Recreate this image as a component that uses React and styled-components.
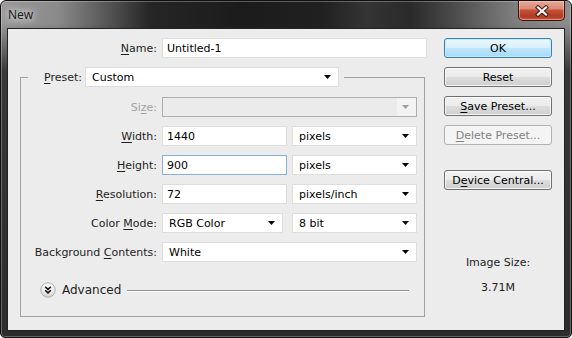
import React from 'react';
import styled, { createGlobalStyle, css } from 'styled-components';

const Global = createGlobalStyle`
  html, body { margin: 0; padding: 0; background: #ffffff; }
  body { font-family: "DejaVu Sans", "Liberation Sans", sans-serif; }
  * { box-sizing: border-box; }
  #root { width: 572px; height: 338px; }
`;

const Window = styled.div`
  width: 572px;
  height: 338px;
  display: flex;
  flex-direction: column;
  border: 1px solid #101010;
  border-radius: 6px 6px 5px 5px;
  overflow: hidden;
  background:
    linear-gradient(to bottom, rgba(48,48,48,0) 0px, rgba(48,48,48,0) 22px, rgba(48,48,48,0.92) 70px, #2c2c2c 100%),
    linear-gradient(90deg, #9a9a9a 0%, #8a8a8a 10%, #5a5a5a 18%, #262626 26%, #1b1b1b 42%, #202020 56%, #343434 64%, #2a2a2a 72%, #4e4e4e 80%, #7e7e7e 90%, #8e8e8e 100%);
  box-shadow: inset 0 0 0 1px rgba(255,255,255,0.28);
`;

const TitleBar = styled.div`
  height: 27px;
  flex: none;
  display: flex;
  align-items: flex-start;
  justify-content: space-between;
`;

const Title = styled.div`
  height: 27px;
  line-height: 27px;
  padding-left: 7px;
  font-family: "Noto Sans", "DejaVu Sans", sans-serif;
  font-size: 12px;
  color: #1c1c1c;
  text-shadow: 0 0 6px rgba(255,255,255,0.9), 0 0 10px rgba(255,255,255,0.6);
`;

const CloseButton = styled.div`
  width: 47px;
  height: 20px;
  margin-right: 6px;
  display: flex;
  align-items: center;
  justify-content: center;
  border: 1px solid #3c120b;
  border-top: none;
  border-radius: 0 0 5px 5px;
  background: linear-gradient(to bottom, #e7a898 0%, #d98a76 40%, #c4503c 50%, #b23a22 80%, #c8573c 100%);
  box-shadow: inset 0 0 0 1px rgba(255,220,210,0.45);
`;

const Client = styled.div`
  flex: 1;
  margin: 0 6px 6px 6px;
  border: 1px solid #222;
  background: #ececec;
  display: grid;
  grid-template-columns: 407px 108px;
  column-gap: 17px;
  align-items: start;
  padding: 9px 12px 0 12px;
  font-size: 11px;
  color: #1e1e1e;
`;

const LeftCol = styled.div`
  display: flex;
  flex-direction: column;
`;

const NameRow = styled.div`
  display: grid;
  grid-template-columns: 137px 265px;
  column-gap: 5px;
  align-items: center;
`;

const Label = styled.div`
  text-align: right;
  white-space: nowrap;
  color: ${p => (p.$disabled ? '#a3a3a3' : '#1e1e1e')};
  u { text-decoration: underline; text-underline-offset: 2px; }
`;

const GroupBox = styled.fieldset`
  margin: 9px 0 0 0;
  width: 405px;
  min-width: 0;
  border: 1px solid #a2a2a2;
  padding: 10px 0 18px 0;
`;

const Legend = styled.legend`
  padding: 0;
  margin-left: 7px;
`;

const LegendInner = styled.div`
  display: flex;
  align-items: center;
  gap: 3px;
  padding-right: 5px;
`;

const LegendLabel = styled(Label)`
  width: 54px;
`;

const FormGrid = styled.div`
  display: grid;
  grid-template-columns: 136px 125px 125px;
  column-gap: 5px;
  row-gap: 9px;
  align-items: center;
`;

const TextField = styled.div`
  height: 20px;
  display: flex;
  align-items: center;
  padding: 0 4px;
  background: #ffffff;
  color: #000;
  border: 1px solid ${p => (p.$focused ? '#86b0da' : '#dddddd')};
  ${p => p.$span && css`grid-column: span ${p.$span};`}
`;

const Select = styled.div`
  height: 20px;
  display: flex;
  align-items: center;
  justify-content: space-between;
  padding: 0 7px 0 6px;
  background: #ffffff;
  color: #000;
  border: 1px solid #dddddd;
  ${p => p.$width && css`width: ${p.$width}px;`}
  ${p => p.$span && css`grid-column: span ${p.$span};`}
  ${p => p.$disabled && css`
    background: linear-gradient(90deg, #ebebeb 0, #ebebeb calc(100% - 19px), #f3f3f3 calc(100% - 19px));
    border-color: #adadad;
  `}
`;

const AdvancedRow = styled.div`
  margin-top: 20px;
  height: 16px;
  display: flex;
  align-items: center;
  gap: 6px;
  padding-left: 19px;
  padding-right: 15px;
  font-size: 12px;
  color: #1e1e1e;
`;

const Rule = styled.div`
  flex: 1;
  height: 1px;
  margin-left: 0px;
  background: #8f8f8f;
  box-shadow: 0 1px 0 #ffffff;
`;

const RightCol = styled.div`
  display: flex;
  flex-direction: column;
  gap: 9px;
`;

const Button = styled.div`
  height: 20px;
  display: flex;
  align-items: center;
  justify-content: center;
  border-radius: 3px;
  border: 1px solid #707070;
  color: #000;
  background: linear-gradient(to bottom, #f2f2f2 0%, #ebebeb 50%, #dddddd 51%, #cfcfcf 100%);
  box-shadow: inset 0 0 0 1px rgba(255,255,255,0.75);
  white-space: nowrap;
  ${p => p.$primary && css`
    border-color: #3c7fb1;
    background: linear-gradient(to bottom, #eaf6fd 0%, #d9f0fc 50%, #bee6fd 51%, #a7d9f5 100%);
    box-shadow: inset 0 0 0 1px #c4ecfd;
  `}
  ${p => p.$disabled && css`
    border-color: #adb2b5;
    background: #f4f4f4;
    color: #838383;
    box-shadow: none;
  `}
  ${p => p.$gapBefore && css`margin-top: ${p.$gapBefore}px;`}
  u { text-decoration: underline; text-underline-offset: 2px; }
`;

const Info = styled.div`
  text-align: center;
  line-height: 14px;
  color: #1e1e1e;
  margin-top: ${p => p.$top}px;
`;

const Arrow = ({ disabled }) => (
  <svg width="7" height="4" viewBox="0 0 7 4">
    <path d="M0 0H7L3.5 4Z" fill={disabled ? '#a0a0a0' : '#000'} />
  </svg>
);

const CloseX = () => (
  <svg width="14" height="12" viewBox="0 0 14 12">
    <path d="M3 2.5L11 9.5M11 2.5L3 9.5" stroke="#4a1a12" strokeWidth="4.2" strokeLinecap="square" />
    <path d="M3 2.5L11 9.5M11 2.5L3 9.5" stroke="#ffffff" strokeWidth="2.2" strokeLinecap="square" />
  </svg>
);

const AdvancedIcon = () => (
  <svg width="16" height="16" viewBox="0 0 16 16">
    <defs>
      <linearGradient id="advg" x1="0" y1="0" x2="0" y2="1">
        <stop offset="0" stopColor="#ffffff" />
        <stop offset="1" stopColor="#d6d6d6" />
      </linearGradient>
    </defs>
    <circle cx="8" cy="8" r="7.2" fill="url(#advg)" stroke="#a4a4a4" strokeWidth="0.9" />
    <path d="M5.2 4.8L8 7.4L10.8 4.8M5.2 8.3L8 10.9L10.8 8.3" fill="none" stroke="#111" strokeWidth="1.5" />
  </svg>
);

export default function App() {
  return (
    <>
      <Global />
      <Window>
        <TitleBar>
          <Title>New</Title>
          <CloseButton><CloseX /></CloseButton>
        </TitleBar>
        <Client>
          <LeftCol>
            <NameRow>
              <Label><u>N</u>ame:</Label>
              <TextField>Untitled-1</TextField>
            </NameRow>
            <GroupBox>
              <Legend>
                <LegendInner>
                  <LegendLabel><u>P</u>reset:</LegendLabel>
                  <Select $width={254}>Custom<Arrow /></Select>
                </LegendInner>
              </Legend>
              <FormGrid>
                <Label $disabled>Si<u>z</u>e:</Label>
                <Select $span={2} $disabled><span /><Arrow disabled /></Select>

                <Label><u>W</u>idth:</Label>
                <TextField>1440</TextField>
                <Select>pixels<Arrow /></Select>

                <Label><u>H</u>eight:</Label>
                <TextField $focused>900</TextField>
                <Select>pixels<Arrow /></Select>

                <Label><u>R</u>esolution:</Label>
                <TextField>72</TextField>
                <Select>pixels/inch<Arrow /></Select>

                <Label>Color <u>M</u>ode:</Label>
                <Select $width={121}>RGB Color<Arrow /></Select>
                <Select>8 bit<Arrow /></Select>

                <Label>Background <u>C</u>ontents:</Label>
                <Select $span={2}>White<Arrow /></Select>
              </FormGrid>
              <AdvancedRow>
                <AdvancedIcon />
                <span>Advanced</span>
                <Rule />
              </AdvancedRow>
            </GroupBox>
          </LeftCol>
          <RightCol>
            <Button $primary>OK</Button>
            <Button>Reset</Button>
            <Button><span><u>S</u>ave Preset...</span></Button>
            <Button $disabled><span><u>D</u>elete Preset...</span></Button>
            <Button $gapBefore={16}><span>D<u>e</u>vice Central...</span></Button>
            <Info $top={57}>Image Size:</Info>
            <Info $top={2}>3.71M</Info>
          </RightCol>
        </Client>
      </Window>
    </>
  );
}
